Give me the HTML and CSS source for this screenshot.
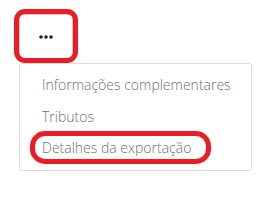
FILE: index.html
```html
<!DOCTYPE html>
<html lang="pt">
<head>
  <meta charset="UTF-8">
  <title>Menu</title>
  <link rel="stylesheet" href="styles.css">
</head>
<body>
  <div class="page">
    <div class="dropdown">
      <button class="btn-more" type="button">
        <svg width="14" height="4" viewBox="0 0 14 4">
          <circle cx="2" cy="2" r="1.8" fill="#222"/>
          <circle cx="7" cy="2" r="1.8" fill="#222"/>
          <circle cx="12" cy="2" r="1.8" fill="#222"/>
        </svg>
      </button>
      <ul class="dropdown-menu">
        <li><a href="#">Informações complementares</a></li>
        <li><a href="#">Tributos</a></li>
        <li><a href="#">Detalhes da exportação</a></li>
      </ul>
      <!-- marcações em vermelho -->
      <div class="mark mark-btn"></div>
      <div class="mark mark-item"></div>
    </div>
  </div>
</body>
</html>
```

FILE: styles.css
```css
body {
  margin: 0;
  background: #fff;
  font-family: "Open Sans", "Liberation Sans", sans-serif;
}
.page {
  padding: 14px 0 0 19px;
}
.dropdown {
  position: relative;
  width: 233px;
}
.btn-more {
  display: flex;
  align-items: center;
  justify-content: center;
  width: 54px;
  height: 45px;
  padding: 0;
  background: #fff;
  border: 1px solid #ccc;
  border-radius: 3px;
}
.dropdown-menu {
  list-style: none;
  margin: 4px 0 0;
  padding: 5px 0;
  width: 233px;
  box-sizing: border-box;
  height: 108px;
  border: 1px solid #ddd;
  border-radius: 3px;
  background: #fff;
}
.dropdown-menu li a {
  display: block;
  height: 31.5px;
  line-height: 31.5px;
  padding-left: 22px;
  font-size: 14px;
  font-weight: 300;
  color: #707070;
  text-decoration: none;
  white-space: nowrap;
}
.mark {
  position: absolute;
  border: 5px solid #ed1c24;
  box-sizing: border-box;
}
.mark-btn {
  left: -5px;
  top: -5px;
  width: 64px;
  height: 54px;
  border-radius: 11px;
}
.mark-item {
  left: 11px;
  top: 117px;
  width: 181px;
  height: 33px;
  border-radius: 15px;
}
```
